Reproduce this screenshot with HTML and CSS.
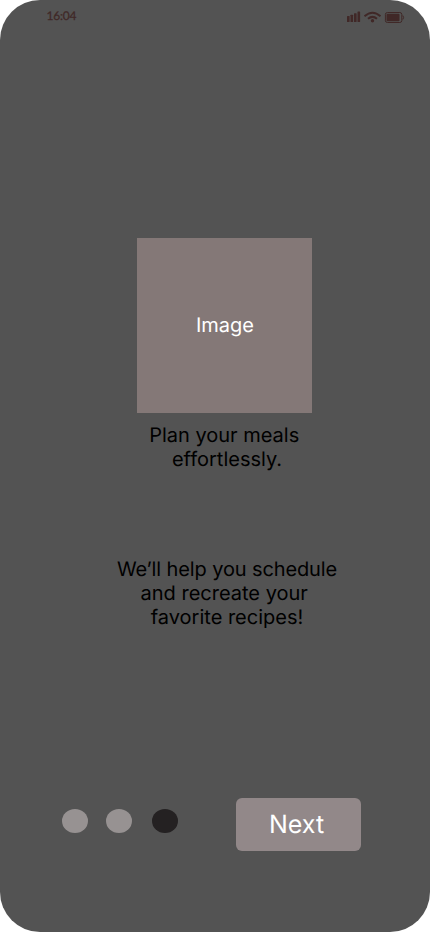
FILE: index.html
```html
<!DOCTYPE html>
<html lang="en">
<head>
<meta charset="utf-8">
<meta name="viewport" content="width=device-width, initial-scale=1">
<title>Meal planner</title>
<link rel="stylesheet" href="styles.css">
</head>
<body>
<main class="screen">
  <header class="status-bar">
    <span class="time">16:04</span>
    <svg class="status-icons" width="58" height="12" viewBox="0 0 58 12" aria-hidden="true">
      <g fill="currentColor">
        <rect x="0" y="5" width="2.6" height="6" rx=".6"/>
        <rect x="3.5" y="3.7" width="2.6" height="7.3" rx=".6"/>
        <rect x="7" y="2.2" width="2.6" height="8.8" rx=".6"/>
        <rect x="10.5" y=".5" width="2.6" height="10.5" rx=".6"/>
        <circle cx="25.5" cy="9.7" r="1.7"/>
        <rect x="39.5" y="2.7" width="13" height="7.6" rx="1"/>
      </g>
      <g fill="none" stroke="currentColor">
        <path d="M17.5 5.3q8-7.2 16 0M21 7.8q4.5-3.8 9 0" stroke-width="2"/>
        <rect x="38.4" y="1.5" width="16.4" height="10" rx="2"/>
        <path d="M55.8 4.5q1.6 2 0 4"/>
      </g>
    </svg>
  </header>
  <section class="intro">
    <div class="image">Image</div>
    <h1 class="copy title">Plan your meals&nbsp;<br>effortlessly.</h1>
    <p class="copy description"><span class="lead">We’ll help you schedule</span><br>and recreate your&nbsp;<br>favorite recipes!</p>
  </section>
  <footer class="controls">
    <div class="dots"><i class="dot"></i><i class="dot"></i><i class="dot active"></i></div>
    <button class="next">Next</button>
  </footer>
</main>
</body>
</html>
```
FILE: styles.css
```css
* {
  box-sizing: border-box;
}

body {
  margin: 0;
  background: #fff;
  font-family: Inter, sans-serif;
  text-rendering: geometricPrecision;
}

.screen {
  width: 430px;
  height: 932px;
  display: flex;
  flex-direction: column;
  overflow: hidden;
  border-radius: 40px;
  background: #535353;
}

.status-bar {
  height: 32px;
  padding: 8px 25px 0 46.5px;
  display: flex;
  justify-content: space-between;
  color: #402827;
}

.time {
  font: 400 12px/16px Lato, sans-serif;
  letter-spacing: -.2px;
  -webkit-text-stroke: .25px currentColor;
}

.status-icons {
  margin-top: 3px;
}

.intro {
  padding-top: 206px;
}

.image {
  width: 175px;
  height: 175px;
  margin-left: 137px;
  padding: 0 0 2px 1px;
  display: grid;
  place-items: center;
  background: #847877;
  color: #fff;
  font-size: 20px;
}

.copy {
  width: 240px;
  margin: 0 0 0 107px;
  color: #000;
  font-size: 20px;
  font-weight: 400;
  line-height: 24px;
  text-align: center;
}

.title {
  margin-top: 10px;
}

.description {
  margin-top: 86px;
}

.lead {
  letter-spacing: -.12px;
}

.controls {
  margin-top: auto;
  padding: 0 69px 81px 62px;
  display: flex;
  justify-content: space-between;
}

.dots {
  display: flex;
  padding-top: 11px;
}

.dot {
  width: 26px;
  height: 24px;
  margin-right: 18px;
  border-radius: 50%;
  background: #979292;
}

.dot.active {
  margin: 0 0 0 2px;
  background: #242122;
}

.next {
  width: 125px;
  height: 53px;
  padding: 0 4px 0 0;
  border: 0;
  border-radius: 6px;
  background: #928889;
  color: #fff;
  font: 400 25px Inter, sans-serif;
  text-rendering: inherit;
}
```
